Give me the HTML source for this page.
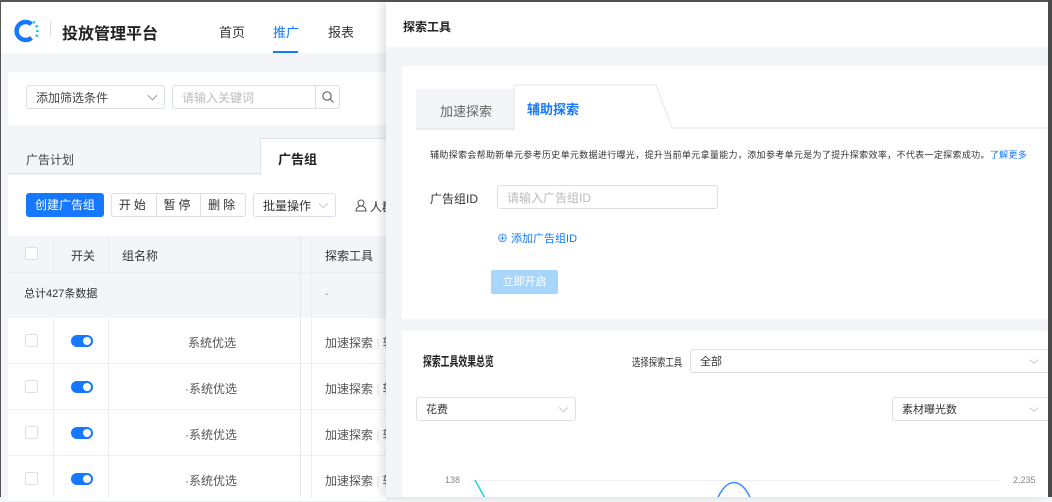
<!DOCTYPE html>
<html><head><meta charset="utf-8"><style>
*{box-sizing:border-box;margin:0;padding:0}
body{width:1052px;height:497px;overflow:hidden;position:relative;background:#f3f5f8;font-family:"Liberation Sans","Noto Sans CJK SC",sans-serif;font-size:12px;color:#333}
.a{position:absolute}
.sel{position:absolute;border:1px solid #dcdfe6;border-radius:3px;background:#fff;color:#333;font-size:12px;padding-left:9px;display:flex;align-items:center}
.chev{position:absolute;right:8px;top:50%;width:7px;height:7px;border-right:1px solid #999;border-bottom:1px solid #999;transform:translateY(-70%) rotate(45deg)}
.chev.l{border-color:#ccc}
.ch2{position:absolute;width:6px;height:6px;border-right:1px solid #ccc;border-bottom:1px solid #ccc;transform:rotate(45deg)}
.row{position:absolute;left:8px;width:378px;height:46px;background:#fff;border-bottom:1px solid #eef0f3}
.cb{position:absolute;left:18px;width:13px;height:13px;border:1px solid #dcdfe6;border-radius:2px;background:#fff}
.tg{position:absolute;left:62px;width:22px;height:12px;border-radius:6px;background:#1677ff}
.tg:after{content:"";position:absolute;right:2px;top:2px;width:8px;height:8px;border-radius:50%;background:#fff}
</style></head><body>
<div class="a" style="left:0;top:0;width:1052px;height:2px;background:#555"></div>
<div class="a" style="left:0;top:2px;width:1px;height:495px;background:#555"></div>
<div class="a" style="left:1px;top:2px;width:385px;height:51px;background:#fff"></div>
<svg class="a" style="left:12px;top:17px" width="28" height="28" viewBox="0 0 28 28"><path d="M19.5 7.2A9 9 0 1 0 19.5 20.8" fill="none" stroke="#1677ff" stroke-width="4.5"/><g stroke="#22c7d8" stroke-width="2"><line x1="22.5" y1="4" x2="21.5" y2="6.5"/><line x1="26" y1="8.5" x2="23.5" y2="10"/><line x1="26.5" y1="14" x2="24" y2="14"/><line x1="26" y1="19.5" x2="23.5" y2="18"/></g></svg>
<div class="a" style="left:50px;top:21px;width:1px;height:16px;background:#ddd"></div>
<div class="a" style="left:62px;top:20px;font-size:16px;font-weight:bold;color:#222">投放管理平台</div>
<div class="a" style="left:219px;top:22px;font-size:13px;color:#333">首页</div>
<div class="a" style="left:273px;top:22px;font-size:13px;color:#1677ff">推广</div>
<div class="a" style="left:273px;top:51px;width:25px;height:2px;background:#1677ff"></div>
<div class="a" style="left:328px;top:22px;font-size:13px;color:#333">报表</div>
<div class="a" style="left:8px;top:72px;width:378px;height:53px;background:#fff"></div>
<div class="sel" style="left:26px;top:85px;width:139px;height:24px;color:#444">添加筛选条件<span class="chev"></span></div>
<div class="sel" style="left:172px;top:85px;width:168px;height:24px;color:#bbb">请输入关键词</div>
<div class="a" style="left:315px;top:85px;width:25px;height:24px;border:1px solid #dcdfe6;border-radius:0 3px 3px 0;background:#fff"></div>
<svg class="a" style="left:321px;top:90px" width="14" height="14"><circle cx="6" cy="6" r="4.2" fill="none" stroke="#666" stroke-width="1.2"/><line x1="9" y1="9" x2="12.5" y2="12.5" stroke="#666" stroke-width="1.2"/></svg>
<div class="a" style="left:8px;top:142px;width:252px;height:32px;background:#f3f5f8;border-bottom:1px solid #dde1e8"></div>
<div class="a" style="left:26px;top:151px;font-size:12px;color:#444">广告计划</div>
<div class="a" style="left:260px;top:138px;width:126px;height:37px;background:#fff;border-left:1px solid #dde1e8;border-top:1px solid #dde1e8"></div>
<div class="a" style="left:278px;top:149px;font-size:13px;font-weight:bold;color:#222">广告组</div>
<div class="a" style="left:8px;top:175px;width:378px;height:61px;background:#fff"></div>
<div class="a" style="left:26px;top:193px;width:78px;height:24px;background:#1677ff;border-radius:3px;color:#fff;font-size:12px;text-align:center;line-height:24px">创建广告组</div>
<div class="a" style="left:111px;top:193px;width:135px;height:24px;border:1px solid #dcdfe6;border-radius:3px;background:#fff;display:flex;font-size:12px;color:#333">
<div style="flex:1;text-align:center;line-height:22px;border-right:1px solid #dcdfe6;letter-spacing:3px">开始</div><div style="flex:1;text-align:center;line-height:22px;border-right:1px solid #dcdfe6;letter-spacing:3px">暂停</div><div style="flex:1;text-align:center;line-height:22px;letter-spacing:3px">删除</div></div>
<div class="sel" style="left:253px;top:193px;width:83px;height:24px">批量操作<span class="chev l"></span></div>
<svg class="a" style="left:355px;top:199px" width="12" height="13"><circle cx="6" cy="4" r="3" fill="none" stroke="#555"/><path d="M1 12c0-3 2.2-5 5-5s5 2 5 5z" fill="none" stroke="#555"/></svg>
<div class="a" style="left:370px;top:198px;font-size:12px">人群</div>
<div class="a" style="left:8px;top:236px;width:378px;height:82px;background:#f3f5f8"></div>
<div class="a" style="left:8px;top:272px;width:378px;height:1px;background:#eaedf1"></div>
<div class="a" style="left:53px;top:236px;width:1px;height:36px;background:#e8ebef"></div>
<div class="a" style="left:108px;top:236px;width:1px;height:36px;background:#e8ebef"></div>
<div class="a" style="left:300px;top:236px;width:1px;height:261px;background:#e5e7eb"></div>
<div class="a" style="left:311px;top:236px;width:1px;height:261px;background:#eceef1"></div>
<div class="cb" style="left:25px;top:247px"></div>
<div class="a" style="left:71px;top:247px;font-size:12px">开关</div>
<div class="a" style="left:122px;top:247px;font-size:12px">组名称</div>
<div class="a" style="left:325px;top:247px;font-size:12px">探索工具</div>
<div class="a" style="left:24px;top:285px;font-size:11px">总计427条数据</div>
<div class="a" style="left:325px;top:289px;font-size:10px;color:#888">-</div>
<div class="row" style="top:318px"></div><div class="row" style="top:364px"></div><div class="row" style="top:410px"></div><div class="row" style="top:456px"></div>
<div class="a" style="left:53px;top:318px;width:1px;height:179px;background:#eceef1"></div>
<div class="a" style="left:108px;top:318px;width:1px;height:179px;background:#eceef1"></div>
<div class="a" style="left:300px;top:318px;width:1px;height:179px;background:#e5e7eb"></div>
<div class="a" style="left:311px;top:318px;width:1px;height:179px;background:#eceef1"></div>
<div class="cb" style="left:25px;top:334px"></div><div class="tg" style="left:71px;top:335px"></div>
<div class="cb" style="left:25px;top:380px"></div><div class="tg" style="left:71px;top:381px"></div>
<div class="cb" style="left:25px;top:426px"></div><div class="tg" style="left:71px;top:427px"></div>
<div class="cb" style="left:25px;top:472px"></div><div class="tg" style="left:71px;top:473px"></div>
<div class="a" style="left:188px;top:334px;color:#555">系统优选</div>
<div class="a" style="left:185px;top:380px;color:#555">·系统优选</div>
<div class="a" style="left:185px;top:426px;color:#555">·系统优选</div>
<div class="a" style="left:185px;top:472px;color:#555">·系统优选</div>
<div class="a" style="left:325px;top:334px;color:#555">加速探索 <span style="color:#ddd">|</span> 辅</div>
<div class="a" style="left:325px;top:380px;color:#555">加速探索 <span style="color:#ddd">|</span> 辅</div>
<div class="a" style="left:325px;top:426px;color:#555">加速探索 <span style="color:#ddd">|</span> 辅</div>
<div class="a" style="left:325px;top:472px;color:#555">加速探索 <span style="color:#ddd">|</span> 辅</div>
<!-- drawer -->
<div class="a" style="left:386px;top:2px;width:662px;height:495px;background:#f3f5f8;box-shadow:-4px 0 8px rgba(0,0,0,.12)"></div>
<div class="a" style="left:386px;top:2px;width:662px;height:45px;background:#fff"></div>
<div class="a" style="left:403px;top:18px;font-size:12px;font-weight:bold;color:#222">探索工具</div>
<div class="a" style="left:402px;top:66px;width:646px;height:253px;background:#fff"></div>
<div class="a" style="left:416px;top:89px;width:98px;height:39px;background:#f3f5f8"></div>
<div class="a" style="left:440px;top:101px;font-size:13px;color:#666">加速探索</div>
<svg class="a" style="left:416px;top:84px" width="632" height="46"><path d="M98 45V1H240L256 44H632" fill="#fff" stroke="#e3e6ea"/><rect x="0" y="44" width="99" height="2" fill="#e9ecef"/></svg>
<div class="a" style="left:527px;top:99px;font-size:13px;color:#1677ff;font-weight:bold">辅助探索</div>
<div class="a" style="left:430px;top:148px;font-size:9px;letter-spacing:0.33px;color:#333;white-space:nowrap">辅助探索会帮助新单元参考历史单元数据进行曝光，提升当前单元拿量能力，添加参考单元是为了提升探索效率，不代表一定探索成功。<span style="color:#1677ff">了解更多</span></div>
<div class="a" style="left:430px;top:190px;font-size:12px;color:#333">广告组ID</div>
<div class="sel" style="left:497px;top:185px;width:221px;height:24px;color:#bbb">请输入广告组ID</div>
<div class="a" style="left:497px;top:230px;font-size:11px;color:#1677ff">⊕ 添加广告组ID</div>
<div class="a" style="left:491px;top:270px;width:67px;height:24px;background:#a8d6fb;border-radius:2px;color:#fff;font-size:11px;text-align:center;line-height:24px">立即开启</div>
<div class="a" style="left:402px;top:331px;width:646px;height:166px;background:#fff"></div>
<div class="a" style="left:423px;top:351px;font-size:13px;font-weight:bold;color:#222;transform:scaleX(.68);transform-origin:0 0;width:120px;white-space:nowrap">探索工具效果总览</div>
<div class="a" style="left:632px;top:354px;font-size:11px;transform:scaleX(.76);transform-origin:0 0;white-space:nowrap">选择探索工具</div>
<div class="sel" style="left:690px;top:349px;width:364px;height:24px;font-size:11px">全部</div>
<div class="ch2" style="left:1031px;top:357px"></div>
<div class="sel" style="left:416px;top:397px;width:160px;height:24px;font-size:11px">花费<span class="chev l"></span></div>
<div class="sel" style="left:892px;top:397px;width:162px;height:24px;font-size:11px">素材曝光数</div>
<div class="ch2" style="left:1031px;top:405px"></div>
<div class="a" style="left:445px;top:475px;font-size:9px;color:#888">138</div>
<div class="a" style="left:1013px;top:475px;font-size:9px;color:#888">2,235</div>
<svg class="a" style="left:460px;top:470px" width="550" height="27"><line x1="10" y1="10.5" x2="540" y2="10.5" stroke="#f0f0f0"/><line x1="15" y1="10" x2="26" y2="30" stroke="#1fd0e3" stroke-width="1.5"/><path d="M255 35C265 5 283 5 293 35" fill="none" stroke="#3d8bff" stroke-width="1.5"/></svg>
<div class="a" style="left:1048px;top:0;width:4px;height:497px;background:#4a4a4a"></div>
</body></html>
